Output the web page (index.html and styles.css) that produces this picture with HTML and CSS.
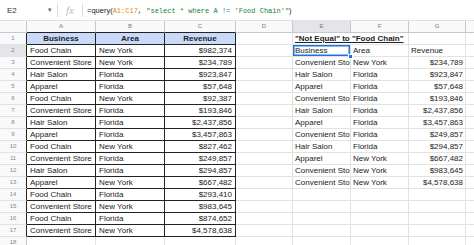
FILE: index.html
```html
<!DOCTYPE html>
<html lang="en">
<head>
  <meta charset="UTF-8" />
  <title>Sheet - query not equal</title>
  <link rel="stylesheet" href="styles.css">
</head>
<body>
  <!-- Formula bar -->
  <div class="formula-bar">
    <div class="name-box">E2</div>
    <span class="caret">▾</span>
    <span class="sep"></span>
    <span class="fx">fx</span>
    <span class="sep"></span>
    <div class="formula"><span class="fn">=query(</span><span class="ref">A1:C17</span><span class="punc">,&nbsp;</span><span class="str">"select * where A != 'Food Chain'"</span><span class="fn">)</span></div>
  </div>

  <!-- Grid -->
  <table class="grid">
    <colgroup>
      <col class="c-num"><col class="c-a"><col class="c-b"><col class="c-c"><col class="c-d"><col class="c-e"><col class="c-f"><col class="c-g"><col>
    </colgroup>
    <thead>
      <tr class="col-head">
        <th class="corner"></th>
        <th class="edge-b">A</th><th class="edge-b">B</th><th class="edge-b">C</th>
        <th>D</th><th class="sel">E</th><th>F</th><th>G</th><th></th>
      </tr>
    </thead>
    <tbody>
      <tr>
        <td class="rn edge-r">1</td>
        <td class="d hd">Business</td><td class="d hd">Area</td><td class="d hd">Revenue</td>
        <td></td><td class="title" colspan="2">"Not Equal" to "Food Chain"</td><td></td><td></td>
      </tr>
      <tr>
        <td class="rn edge-r sel">2</td>
        <td class="d">Food Chain</td><td class="d">New York</td><td class="d num">$982,374</td>
        <td></td><td class="active">Business<span class="handle"></span></td><td>Area</td><td>Revenue</td><td></td>
      </tr>
      <tr>
        <td class="rn edge-r">3</td>
        <td class="d">Convenient Store</td><td class="d">New York</td><td class="d num">$234,789</td>
        <td></td><td>Convenient Store</td><td>New York</td><td class="num">$234,789</td><td></td>
      </tr>
      <tr>
        <td class="rn edge-r">4</td>
        <td class="d">Hair Salon</td><td class="d">Florida</td><td class="d num">$923,847</td>
        <td></td><td>Hair Salon</td><td>Florida</td><td class="num">$923,847</td><td></td>
      </tr>
      <tr>
        <td class="rn edge-r">5</td>
        <td class="d">Apparel</td><td class="d">Florida</td><td class="d num">$57,648</td>
        <td></td><td>Apparel</td><td>Florida</td><td class="num">$57,648</td><td></td>
      </tr>
      <tr>
        <td class="rn edge-r">6</td>
        <td class="d">Food Chain</td><td class="d">New York</td><td class="d num">$92,387</td>
        <td></td><td>Convenient Store</td><td>Florida</td><td class="num">$193,846</td><td></td>
      </tr>
      <tr>
        <td class="rn edge-r">7</td>
        <td class="d">Convenient Store</td><td class="d">Florida</td><td class="d num">$193,846</td>
        <td></td><td>Hair Salon</td><td>Florida</td><td class="num">$2,437,856</td><td></td>
      </tr>
      <tr>
        <td class="rn edge-r">8</td>
        <td class="d">Hair Salon</td><td class="d">Florida</td><td class="d num">$2,437,856</td>
        <td></td><td>Apparel</td><td>Florida</td><td class="num">$3,457,863</td><td></td>
      </tr>
      <tr>
        <td class="rn edge-r">9</td>
        <td class="d">Apparel</td><td class="d">Florida</td><td class="d num">$3,457,863</td>
        <td></td><td>Convenient Store</td><td>Florida</td><td class="num">$249,857</td><td></td>
      </tr>
      <tr>
        <td class="rn edge-r">10</td>
        <td class="d">Food Chain</td><td class="d">New York</td><td class="d num">$827,462</td>
        <td></td><td>Hair Salon</td><td>Florida</td><td class="num">$294,857</td><td></td>
      </tr>
      <tr>
        <td class="rn edge-r">11</td>
        <td class="d">Convenient Store</td><td class="d">Florida</td><td class="d num">$249,857</td>
        <td></td><td>Apparel</td><td>New York</td><td class="num">$667,482</td><td></td>
      </tr>
      <tr>
        <td class="rn edge-r">12</td>
        <td class="d">Hair Salon</td><td class="d">Florida</td><td class="d num">$294,857</td>
        <td></td><td>Convenient Store</td><td>New York</td><td class="num">$983,645</td><td></td>
      </tr>
      <tr>
        <td class="rn edge-r">13</td>
        <td class="d">Apparel</td><td class="d">New York</td><td class="d num">$667,482</td>
        <td></td><td>Convenient Store</td><td>New York</td><td class="num">$4,578,638</td><td></td>
      </tr>
      <tr>
        <td class="rn edge-r">14</td>
        <td class="d">Food Chain</td><td class="d">Florida</td><td class="d num">$293,410</td>
        <td></td><td></td><td></td><td></td><td></td>
      </tr>
      <tr>
        <td class="rn edge-r">15</td>
        <td class="d">Convenient Store</td><td class="d">New York</td><td class="d num">$983,645</td>
        <td></td><td></td><td></td><td></td><td></td>
      </tr>
      <tr>
        <td class="rn edge-r">16</td>
        <td class="d">Food Chain</td><td class="d">Florida</td><td class="d num">$874,652</td>
        <td></td><td></td><td></td><td></td><td></td>
      </tr>
      <tr>
        <td class="rn edge-r">17</td>
        <td class="d">Convenient Store</td><td class="d">New York</td><td class="d num">$4,578,638</td>
        <td></td><td></td><td></td><td></td><td></td>
      </tr>
      <tr>
        <td class="rn">18</td>
        <td></td><td></td><td></td><td></td><td></td><td></td><td></td><td></td>
      </tr>
    </tbody>
  </table>
</body>
</html>
```

FILE: styles.css
```css
/* Reset */
*, *::before, *::after {
  box-sizing: border-box;
}

body {
  margin: 0;
  width: 474px;
  height: 245px;
  overflow: hidden;
  background: #fff;
  font-family: 'Liberation Sans', Arial, sans-serif;
  color: #222;
}

/* Formula bar */
.formula-bar {
  height: 21px;
  display: flex;
  align-items: center;
  border-bottom: 1px solid #e1e1e1;
  font-size: 8px;
}

.name-box {
  width: 48px;
  padding-left: 7px;
  color: #333;
}

.caret {
  font-size: 7px;
  color: #666;
  width: 9px;
}

.sep {
  width: 1px;
  height: 13px;
  background: #dadce0;
}

.fx {
  font-family: 'Liberation Serif', serif;
  font-style: italic;
  font-size: 11px;
  color: #bbb;
  width: 24px;
  text-align: center;
}

.formula {
  padding-left: 4px;
  font-family: 'Liberation Mono', monospace;
  font-size: 7px;
  white-space: nowrap;
}

.formula .fn { color: #222; font-family: 'Liberation Sans', Arial, sans-serif; font-size: 7.5px; }
.formula .punc { color: #222; }
.formula .ref { color: #e28a14; }
.formula .str { color: #188038; }

/* Grid */
.grid {
  border-collapse: separate;
  border-spacing: 0;
  table-layout: fixed;
  width: 480px;
  font-size: 8px;
}

.c-num { width: 27px; }
.c-a { width: 69px; }
.c-b { width: 69px; }
.c-c { width: 71px; }
.c-d { width: 57px; }
.c-e { width: 58px; }
.c-f { width: 58px; }
.c-g { width: 57px; }

.grid tr {
  height: 12px;
}

.grid td,
.grid th {
  padding: 0 2px;
  height: 12px;
  line-height: 11px;
  white-space: nowrap;
  overflow: hidden;
  border-right: 1px solid #e2e2e2;
  border-bottom: 1px solid #e2e2e2;
  text-align: left;
  font-weight: normal;
}

.col-head th {
  background: #f8f9fa;
  color: #777;
  font-size: 6px;
  text-align: center;
  border-color: #c7c7c7;
}

.col-head th.sel {
  background: #e3e5e8;
}

.corner {
  background: #f8f9fa;
}

.grid td.rn {
  background: #f8f9fa;
  color: #888;
  font-size: 6px;
  text-align: center;
  border-right-color: #c7c7c7;
}

.grid td.rn.sel {
  background: #e3e5e8;
}

.grid th.edge-b {
  border-bottom-color: #222;
}

.grid td.edge-r {
  border-right-color: #222;
}

/* Source data table */
.grid td.d {
  border-right-color: #222;
  border-bottom-color: #222;
  padding: 0 3px;
}

.grid td.hd {
  background: #c9daf8;
  font-weight: bold;
  text-align: center;
}

.grid td.num {
  text-align: right;
}

.grid td.title {
  font-weight: bold;
  text-decoration: underline;
}

/* Selected cell */
.grid td.active {
  position: relative;
  overflow: visible;
  box-shadow: inset 0 0 0 1.5px #1a73e8;
}

.handle {
  position: absolute;
  right: -3px;
  bottom: -3px;
  width: 5px;
  height: 5px;
  background: #1a73e8;
  border: 1px solid #fff;
}
```
